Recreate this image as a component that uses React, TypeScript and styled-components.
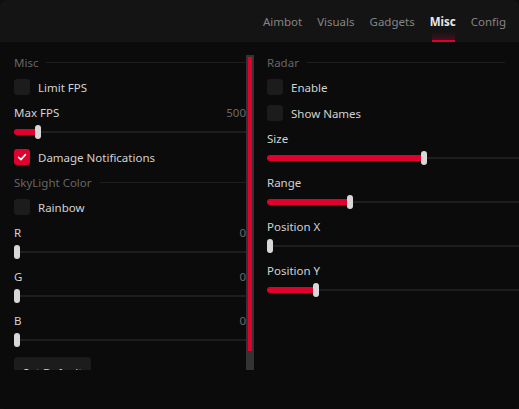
import styled, { createGlobalStyle } from 'styled-components'

const GlobalStyle = createGlobalStyle`
  html, body {
    margin: 0;
    padding: 0;
    background: #0e0e0e;
  }
  body {
    font-family: "Noto Sans", "DejaVu Sans", sans-serif;
    -webkit-font-smoothing: antialiased;
  }
`

const RED = '#e0002e'

const Window = styled.div`
  width: 519px;
  height: 409px;
  background: #0b0b0b;
  border-radius: 6px;
  overflow: hidden;
  display: flex;
  flex-direction: column;
`

const Header = styled.div`
  height: 42px;
  flex: none;
  background: #141414;
  display: flex;
  justify-content: flex-end;
  align-items: stretch;
  gap: 15px;
  padding-right: 13px;
`

const Tab = styled.div<{ $active?: boolean }>`
  position: relative;
  display: flex;
  align-items: center;
  font-size: 11.5px;
  font-weight: ${p => (p.$active ? 700 : 400)};
  color: ${p => (p.$active ? '#e8e8e8' : '#858585')};

  ${p => p.$active && `
    &::after {
      content: '';
      position: absolute;
      left: 2px;
      right: 1px;
      bottom: 0;
      height: 10px;
      background: linear-gradient(to bottom, rgba(120, 10, 40, 0), rgba(120, 10, 40, 0.5));
      border-bottom: 2px solid ${RED};
      box-sizing: border-box;
    }
  `}
`

const Body = styled.div`
  flex: 1;
  display: flex;
  align-items: flex-start;
  gap: 13px;
  padding-left: 14px;
  overflow: hidden;
`

const LeftPanel = styled.div`
  margin-top: 13px;
  height: 315px;
  display: flex;
  flex: none;
`

const ScrollContent = styled.div`
  width: 232px;
  height: 100%;
  overflow: hidden;
  display: flex;
  flex-direction: column;
  gap: 10px;
`

const ScrollTrack = styled.div`
  width: 8px;
  height: 100%;
  background: #333;
  padding: 2px 2px 0;
  box-sizing: border-box;
`

const ScrollThumb = styled.div`
  height: 294px;
  background: ${RED};
`

const RightPanel = styled.div`
  margin-top: 13px;
  width: 290px;
  flex: none;
  display: flex;
  flex-direction: column;
  gap: 10px;
`

const SectionHeader = styled.div`
  display: flex;
  align-items: center;
  gap: 8px;
  height: 14px;
  font-size: 11.5px;
  color: #666;

  &::after {
    content: '';
    flex: 1;
    height: 1px;
    background: #1e1e1e;
  }
`

const RadarHeader = styled(SectionHeader)`
  margin-right: 52px;
`

const CheckRow = styled.div`
  display: flex;
  align-items: center;
  gap: 8px;
  height: 16px;
  font-size: 11.5px;
  color: #d2d2d2;
`

const Box = styled.div<{ $checked?: boolean }>`
  width: 16px;
  height: 16px;
  border-radius: 3px;
  background: ${p => (p.$checked ? RED : '#1c1c1c')};
  display: flex;
  align-items: center;
  justify-content: center;
`

const SliderGroup = styled.div`
  display: flex;
  flex-direction: column;
  gap: 6px;
`

const LabelRow = styled.div`
  display: flex;
  justify-content: space-between;
  align-items: center;
  height: 14px;
  font-size: 11.5px;
  color: #d2d2d2;
`

const Value = styled.span`
  color: #6a6a6a;
`

const Track = styled.div`
  position: relative;
  height: 14px;

  &::before {
    content: '';
    position: absolute;
    left: 0;
    right: 0;
    top: 6px;
    height: 2px;
    background: #1e1e1e;
  }
`

const Fill = styled.div`
  position: absolute;
  left: 0;
  top: 4px;
  height: 6px;
  border-radius: 3px;
  background: ${RED};
`

const Thumb = styled.div`
  position: absolute;
  top: 0;
  width: 6px;
  height: 14px;
  border-radius: 3px;
  background: #d8d8d8;
`

const Button = styled.div`
  flex: none;
  align-self: flex-start;
  height: 30px;
  padding: 0 9px;
  border-radius: 4px;
  background: #1c1c1c;
  color: #d2d2d2;
  font-size: 11.5px;
  display: flex;
  align-items: center;
`

function Check({ label, checked }: { label: string; checked?: boolean }) {
  return (
    <CheckRow>
      <Box $checked={checked}>
        {checked && (
          <svg width="16" height="16" viewBox="0 0 16 16">
            <path d="M4.6 8.4 L7 10.6 L11.4 5.6" fill="none" stroke="#fff" strokeWidth="1.6" strokeLinecap="round" strokeLinejoin="round" />
          </svg>
        )}
      </Box>
      {label}
    </CheckRow>
  )
}

function Slider({ label, value, pos }: { label: string; value?: string; pos: number }) {
  return (
    <SliderGroup>
      <LabelRow>
        <span>{label}</span>
        {value !== undefined && <Value>{value}</Value>}
      </LabelRow>
      <Track>
        {pos > 0 && <Fill style={{ width: pos + 3 }} />}
        <Thumb style={{ left: pos }} />
      </Track>
    </SliderGroup>
  )
}

const tabs = ['Aimbot', 'Visuals', 'Gadgets', 'Misc', 'Config']

export default function App() {
  return (
    <>
      <GlobalStyle />
      <Window>
        <Header>
          {tabs.map(t => (
            <Tab key={t} $active={t === 'Misc'}>{t}</Tab>
          ))}
        </Header>
        <Body>
          <LeftPanel>
            <ScrollContent>
              <SectionHeader>Misc</SectionHeader>
              <Check label="Limit FPS" />
              <Slider label="Max FPS" value="500" pos={21} />
              <Check label="Damage Notifications" checked />
              <SectionHeader>SkyLight Color</SectionHeader>
              <Check label="Rainbow" />
              <Slider label="R" value="0" pos={0} />
              <Slider label="G" value="0" pos={0} />
              <Slider label="B" value="0" pos={0} />
              <Button>Set Default</Button>
            </ScrollContent>
            <ScrollTrack>
              <ScrollThumb />
            </ScrollTrack>
          </LeftPanel>
          <RightPanel>
            <RadarHeader>Radar</RadarHeader>
            <Check label="Enable" />
            <Check label="Show Names" />
            <Slider label="Size" pos={154} />
            <Slider label="Range" pos={80} />
            <Slider label="Position X" pos={0} />
            <Slider label="Position Y" pos={46} />
          </RightPanel>
        </Body>
      </Window>
    </>
  )
}
